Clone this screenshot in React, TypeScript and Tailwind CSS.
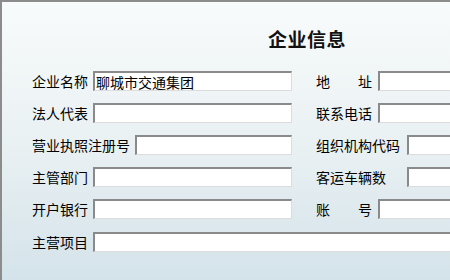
const FONT = '"Noto Sans CJK SC", "Noto Sans", sans-serif';

type Field = { label: string; value?: string; spread?: boolean };

const rows: { left: Field; right?: Field; wide?: boolean }[] = [
  { left: { label: '企业名称', value: '聊城市交通集团' }, right: { label: '地址', spread: true } },
  { left: { label: '法人代表' }, right: { label: '联系电话' } },
  { left: { label: '营业执照注册号' }, right: { label: '组织机构代码' }, wide: true },
  { left: { label: '主管部门' }, right: { label: '客运车辆数' }, wide: true },
  { left: { label: '开户银行' }, right: { label: '账号', spread: true } },
];

const Input = ({ value, className = '' }: { value?: string; className?: string }) => (
  <div
    className={`h-5 flex items-center bg-white border-t-2 border-l-2 border-r border-b border-t-[#8a8a8a] border-l-[#8a8a8a] border-r-[#dcdcdc] border-b-[#dcdcdc] pl-[1px] text-[14px] leading-none text-black ${className}`}
  >
    {value}
  </div>
);

const Label = ({ f, width }: { f: Field; width?: string }) =>
  f.spread ? (
    <span className="flex w-[56px] shrink-0 justify-between text-[14px] leading-none">
      <span>{f.label[0]}</span>
      <span>{f.label[1]}</span>
    </span>
  ) : (
    <span className={`shrink-0 text-[14px] leading-none ${width ?? ''}`}>{f.label}</span>
  );

export default function App() {
  return (
    <div
      className="w-[450px] h-[280px] overflow-hidden border-t-2 border-l-2 border-[#8c8c8c] bg-gradient-to-b from-[#f8fbfb] via-[#eaf1f3] to-[#d4e3ea] text-black"
      style={{ fontFamily: FONT }}
    >
      <div className="pl-[266px] pt-[27px] text-[19px] font-bold leading-none tracking-[0.5px] text-[#111]">
        企业信息
      </div>
      <div className="mt-[23px] flex flex-col gap-3 pl-[30px]">
        {rows.map((r, i) => (
          <div key={i} className="flex h-5 items-center">
            <div className="flex w-[260px] shrink-0 items-center gap-[5px]">
              <Label f={r.left} />
              <Input value={r.left.value} className="flex-1" />
            </div>
            {r.right && (
              <div className="ml-[24px] flex items-center gap-[6px]">
                <Label f={r.right} width={r.wide ? 'w-[85px]' : ''} />
                <Input className="w-[200px] shrink-0" />
              </div>
            )}
          </div>
        ))}
        <div className="flex h-5 items-center gap-[5px] mt-[1px]">
          <Label f={{ label: '主营项目' }} />
          <Input className="w-[400px] shrink-0" />
        </div>
      </div>
    </div>
  );
}
